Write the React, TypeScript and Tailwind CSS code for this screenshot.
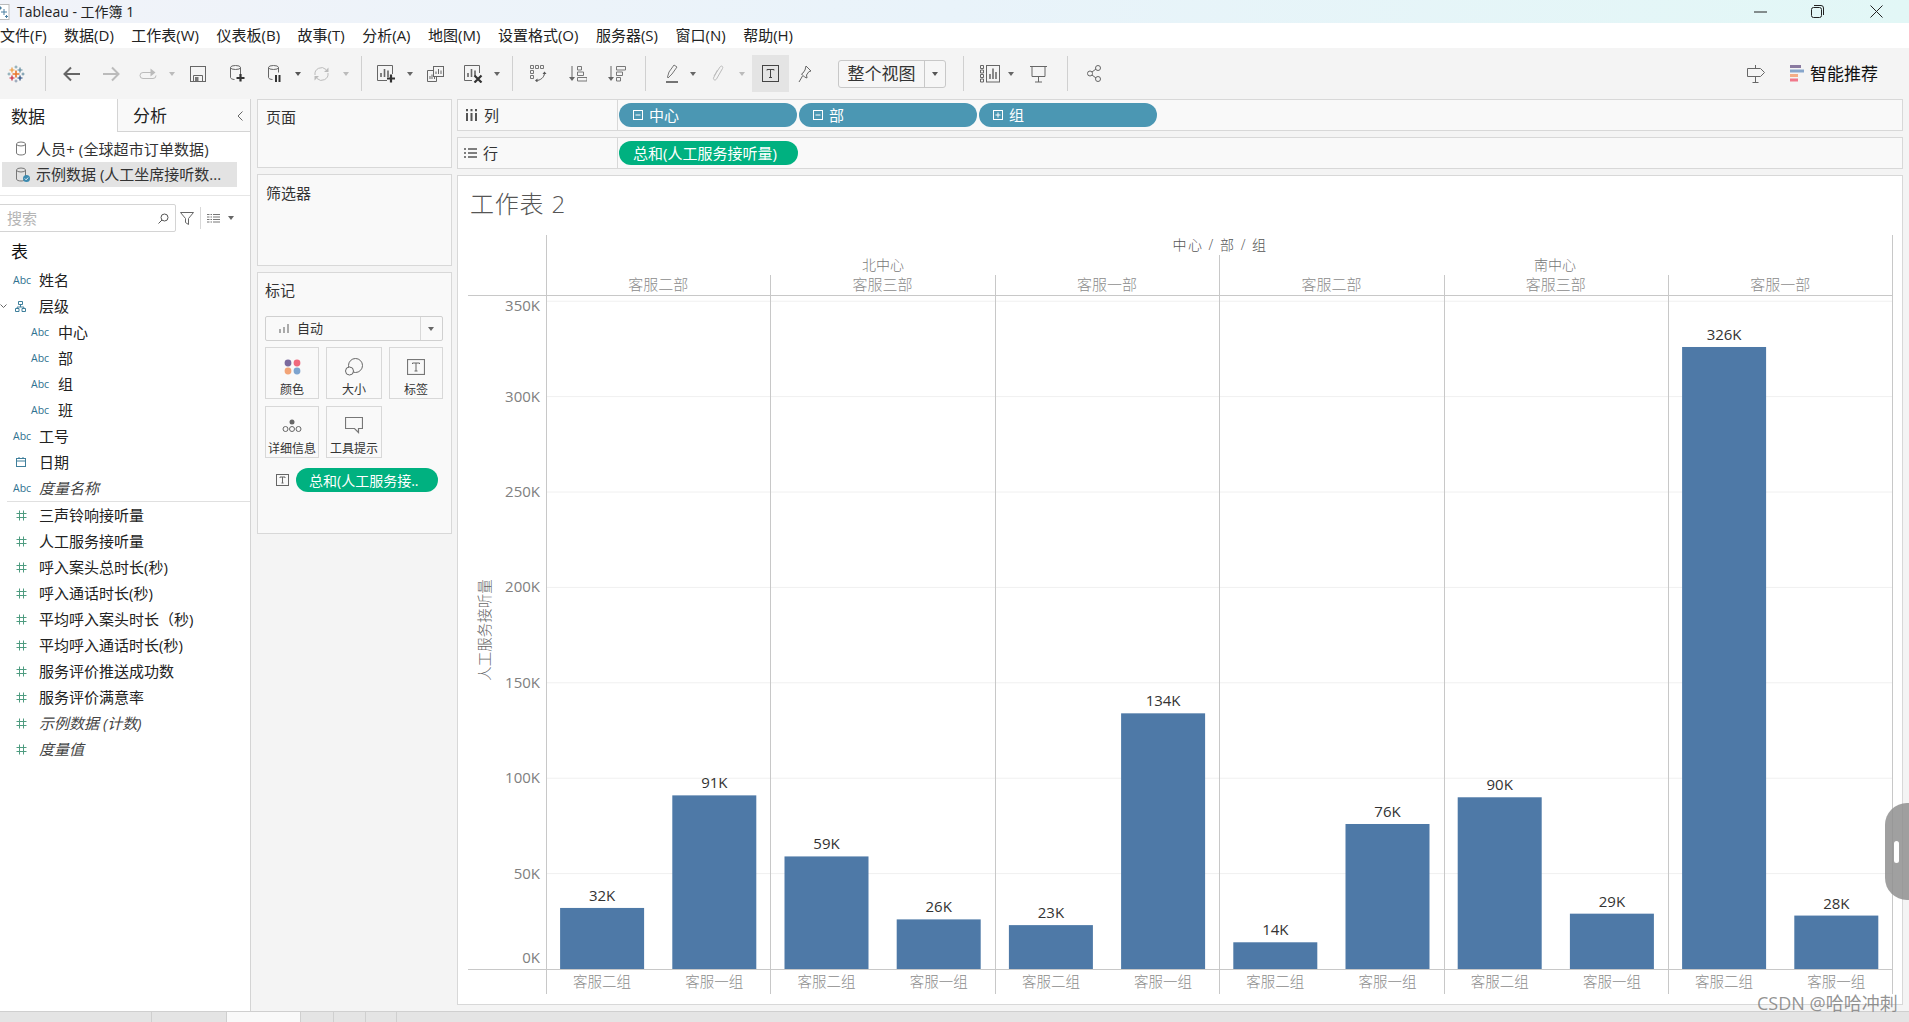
const bars = [
  { sub: "客服二组", value: 32 },
  { sub: "客服一组", value: 91 },
  { sub: "客服二组", value: 59 },
  { sub: "客服一组", value: 26 },
  { sub: "客服二组", value: 23 },
  { sub: "客服一组", value: 134 },
  { sub: "客服二组", value: 14 },
  { sub: "客服一组", value: 76 },
  { sub: "客服二组", value: 90 },
  { sub: "客服一组", value: 29 },
  { sub: "客服二组", value: 326 },
  { sub: "客服一组", value: 28 },
];
const depts = ["客服二部", "客服三部", "客服一部", "客服二部", "客服三部", "客服一部"];
const menus = ["数据(D)", "工作表(W)", "仪表板(B)", "故事(T)", "分析(A)", "地图(M)", "设置格式(O)", "服务器(S)", "窗口(N)", "帮助(H)"];
const measures = [
  { name: "三声铃响接听量" },
  { name: "人工服务接听量" },
  { name: "呼入案头总时长(秒)" },
  { name: "呼入通话时长(秒)" },
  { name: "平均呼入案头时长（秒)" },
  { name: "平均呼入通话时长(秒)" },
  { name: "服务评价推送成功数" },
  { name: "服务评价满意率" },
  { name: "示例数据 (计数)", italic: true },
  { name: "度量值", italic: true },
];

const PANE = 224.4;
const LEFT = 546;
const BASE = 969;
const PX_PER_K = 1.908;

function Caret({ className = "" }: { className?: string }) {
  return (
    <svg width="6" height="4" viewBox="0 0 6 4" className={className}>
      <path d="M0 0h6L3 4z" fill="currentColor" />
    </svg>
  );
}

function Sep({ className = "" }: { className?: string }) {
  return <div className={`w-px h-[35px] bg-[#d0d0d0] shrink-0 ${className}`} />;
}

function TableauLogo({ className = "" }: { className?: string }) {
  const crosses = [
    { x: 9, y: 9, r: 3.5, c: "#e8762b", w: 1.6 },
    { x: 5, y: 5, r: 2.5, c: "#ee9a3a", w: 1.2 },
    { x: 13, y: 5, r: 2.5, c: "#5b879b", w: 1.2 },
    { x: 5, y: 13, r: 2.5, c: "#c72035", w: 1.2 },
    { x: 13, y: 13, r: 2.5, c: "#1f447b", w: 1.2 },
    { x: 9, y: 2, r: 1.5, c: "#7199a6", w: 0.9 },
    { x: 9, y: 16, r: 1.5, c: "#7d8fa8", w: 0.9 },
    { x: 2, y: 9, r: 1.5, c: "#7099a6", w: 0.9 },
    { x: 16, y: 9, r: 1.5, c: "#59879b", w: 0.9 },
  ];
  return (
    <svg width="18" height="18" viewBox="0 0 18 18" className={`shrink-0 ${className}`}>
      {crosses.map((p, i) => (
        <path key={i} d={`M${p.x - p.r} ${p.y}h${p.r * 2}M${p.x} ${p.y - p.r}v${p.r * 2}`} stroke={p.c} strokeWidth={p.w} fill="none" />
      ))}
    </svg>
  );
}

function Cylinder({ extra }: { extra?: "check" }) {
  return (
    <svg width="16" height="16" viewBox="0 0 16 16" className="shrink-0">
      <ellipse cx="6" cy="3" rx="4.5" ry="2" fill="none" stroke="#777" />
      <path d="M1.5 3v9c0 1.2 2 2 4.5 2M10.500 3v4" fill="none" stroke="#777" />
      {extra === "check" ? (
        <>
          <path d="M10.500 3v9c0 1.200-2 2-4.500 2" fill="none" stroke="#777" />
          <circle cx="11.500" cy="11.500" r="3.500" fill="#3d8bb0" />
          <path d="M9.800 11.500l1.300 1.300 2-2.200" fill="none" stroke="#fff" strokeWidth="0.900" />
        </>
      ) : (
        <path d="M10.500 3v9c0 1.200-2 2-4.500 2" fill="none" stroke="#777" />
      )}
    </svg>
  );
}

function HashIcon() {
  return (
    <svg width="11" height="11" viewBox="0 0 11 11" className="shrink-0">
      <path d="M3.500 0.500v10M7.500 0.500v10M0.500 3.500h10M0.500 7.500h10" stroke="#4e9c80" strokeWidth="1" fill="none" />
    </svg>
  );
}

function Abc() {
  return <span className="text-[10.5px] leading-none text-[#2f7290] w-[16px] shrink-0 not-italic">Abc</span>;
}

function PillBox({ plus }: { plus?: boolean }) {
  return (
    <svg width="10" height="10" viewBox="0 0 10 10" className="shrink-0">
      <rect x="0.500" y="0.500" width="9" height="9" fill="none" stroke="#fff" />
      <path d={plus ? "M2.500 5h5M5 2.500v5" : "M2.500 5h5"} stroke="#fff" />
    </svg>
  );
}

function Row({ children, indent, italic }: { children: React.ReactNode; indent?: boolean; italic?: boolean }) {
  return (
    <div className={`h-[26px] flex items-center text-[15px] shrink-0 ${indent ? "pl-[31px]" : "pl-[13px]"} ${italic ? "italic text-[#444]" : "text-[#222]"}`}>
      {children}
    </div>
  );
}

function MarkBtn({ label, icon, wide }: { label: string; icon: React.ReactNode; wide?: boolean }) {
  return (
    <div className={`${wide ? "w-[56px]" : "w-[54px]"} h-[52px] border border-[#d8d8d8] bg-[#f9f9f9] flex flex-col items-center shrink-0`}>
      <div className="h-[35px] flex items-center justify-center pt-[2px]">{icon}</div>
      <span className="text-[12px] leading-[14px] text-[#333] whitespace-nowrap">{label}</span>
    </div>
  );
}

function Chart() {
  return (
    <svg width="1444" height="775" viewBox="458 228 1444 775" className="block font-['Open_Sans','Noto_Sans_CJK_SC',sans-serif]">
      {[50, 100, 150, 200, 250, 300, 350].map((k) => (
        <line key={k} x1={LEFT} x2={1892} y1={BASE - k * PX_PER_K} y2={BASE - k * PX_PER_K} stroke="#f0f0f0" />
      ))}
      {[0, 50, 100, 150, 200, 250, 300, 350].map((k) => {
        const y = k === 0 ? 963 : k === 350 ? 311 : BASE - k * PX_PER_K + 5;
        return (
          <text key={k} x={540} y={y} textAnchor="end" fontSize="15" fill="#808080">
            {k}K
          </text>
        );
      })}
      <text transform="translate(490 630) rotate(-90)" textAnchor="middle" fontSize="14.500" fill="#666" fontWeight="300">
        人工服务接听量
      </text>

      <line x1={468} x2={1893} y1={295.500} y2={295.500} stroke="#c8c8c8" />
      <line x1={468} x2={1893} y1={969.500} y2={969.500} stroke="#c8c8c8" />
      <line x1={546.500} x2={546.500} y1={235} y2={994} stroke="#c8c8c8" />
      {[1, 2, 4, 5].map((i) => (
        <line key={i} x1={Math.round(LEFT + i * PANE) + 0.5} x2={Math.round(LEFT + i * PANE) + 0.5} y1={275} y2={994} stroke="#c8c8c8" />
      ))}
      <line x1={1219.500} x2={1219.500} y1={255} y2={994} stroke="#c8c8c8" />
      <line x1={1892.500} x2={1892.500} y1={235} y2={994} stroke="#c8c8c8" />

      <text x={1220} y={250} textAnchor="middle" fontSize="14" letterSpacing="1.5" fill="#555" fontWeight="300">
        中心 / 部 / 组
      </text>
      <text x={883} y={270} textAnchor="middle" fontSize="14" fill="#777" fontWeight="300">
        北中心
      </text>
      <text x={1555} y={270} textAnchor="middle" fontSize="14" fill="#777" fontWeight="300">
        南中心
      </text>
      {depts.map((d, i) => (
        <text key={i} x={LEFT + (i + 0.5) * PANE} y={290} textAnchor="middle" fontSize="15" fill="#8c8c8c" fontWeight="300">
          {d}
        </text>
      ))}

      {bars.map((b, i) => {
        const cx = LEFT + (i + 0.5) * (PANE / 2);
        const h = b.value * PX_PER_K;
        return (
          <g key={i}>
            <rect x={cx - 42} y={BASE - h} width={84} height={h} fill="#4e79a7" />
            <text x={cx} y={BASE - h - 7} textAnchor="middle" fontSize="15" fill="#333">
              {b.value}K
            </text>
            <text x={cx} y={987} textAnchor="middle" fontSize="14.500" fill="#8c8c8c" fontWeight="300">
              {b.sub}
            </text>
          </g>
        );
      })}
    </svg>
  );
}

export default function App() {
  return (
    <div className="relative w-[1909px] h-[1022px] overflow-hidden flex flex-col bg-[#f4f4f4] text-[#222] font-['Open_Sans','Noto_Sans_CJK_SC',sans-serif]">
      {/* title bar */}
      <div className="h-[23px] shrink-0 flex items-center bg-gradient-to-r from-[#f1f3f9] via-[#e9f3fa] to-[#e2f7f6]">
        <svg width="10" height="16" viewBox="0 0 10 16" className="shrink-0">
          <rect x="-6" y="0.500" width="15" height="15" fill="#fff" stroke="#bbb" />
          <path d="M1 8h6M4 5v6M-1 4h3M0.500 2.500v3M5 12.500h3M6.500 11v3" stroke="#4b7ea0" />
        </svg>
        <span className="ml-[7px] text-[14px] text-[#222]">Tableau - 工作簿 1</span>
        <svg width="13" height="2" viewBox="0 0 13 2" className="ml-auto">
          <path d="M0 1h13" stroke="#222" />
        </svg>
        <svg width="13" height="13" viewBox="0 0 13 13" className="ml-[44px]">
          <rect x="0.500" y="2.500" width="10" height="10" rx="2" fill="none" stroke="#222" />
          <path d="M3 .5h7a2.500 2.500 0 0 1 2.500 2.500v7" fill="none" stroke="#222" />
        </svg>
        <svg width="13" height="13" viewBox="0 0 13 13" className="ml-[46px] mr-[26px]">
          <path d="M0.500 0.500l12 12M12.500 0.500l-12 12" stroke="#222" />
        </svg>
      </div>

      {/* menu */}
      <div className="h-[25px] shrink-0 bg-white flex items-center gap-[17.5px] text-[15px] text-[#222] whitespace-nowrap">
        <span>文件(F)</span>
        {menus.map((m) => (
          <span key={m}>{m}</span>
        ))}
      </div>

      {/* toolbar */}
      <div className="h-[51px] shrink-0 flex items-center bg-[#f4f4f4] text-[#666]">
        <TableauLogo className="ml-[7px]" />
        <Sep className="ml-[20px]" />
        <svg width="18" height="16" viewBox="0 0 18 16" className="ml-[17px] shrink-0">
          <path d="M17 8H2M8 1.500L1.500 8 8 14.500" fill="none" stroke="#666" strokeWidth="2" />
        </svg>
        <svg width="18" height="16" viewBox="0 0 18 16" className="ml-[21px] shrink-0">
          <path d="M1 8h15M10 1.500L16.500 8 10 14.500" fill="none" stroke="#bbb" strokeWidth="2" />
        </svg>
        <svg width="18" height="14" viewBox="0 0 18 14" className="ml-[19px] shrink-0">
          <path d="M14 5.500H4a3 3 0 0 0 0 6h10a3 3 0 0 0 3-3" fill="none" stroke="#bbb" />
          <path d="M11.500 1.500v8l5-4z" fill="#bbb" />
        </svg>
        <Caret className="ml-[12px] shrink-0 text-[#bbb]" />
        <svg width="16" height="16" viewBox="0 0 16 16" className="ml-[15px] shrink-0">
          <rect x="0.500" y="0.500" width="15" height="15" fill="none" stroke="#666" />
          <path d="M3.500 15.500v-6h9v6" fill="none" stroke="#666" />
          <rect x="5" y="11" width="3.500" height="4" fill="#777" />
        </svg>
        <svg width="14" height="17" viewBox="0 0 14 17" className="ml-[24px] shrink-0 overflow-visible">
          <ellipse cx="5.500" cy="2.500" rx="5" ry="2" fill="none" stroke="#666" />
          <path d="M0.500 2.500v10c0 1 2 2 4 2M10.500 2.500v7" fill="none" stroke="#666" />
          <path d="M10.500 9v7.500M6.500 13h8" stroke="#333" strokeWidth="2.200" />
        </svg>
        <svg width="12" height="17" viewBox="0 0 12 17" className="ml-[24px] shrink-0 overflow-visible">
          <ellipse cx="5.500" cy="2.500" rx="5" ry="2" fill="none" stroke="#666" />
          <path d="M0.500 2.500v10c0 1 2 2 4 2M10.500 2.500v5" fill="none" stroke="#666" />
          <path d="M8 10v7M11.500 10v7" stroke="#333" strokeWidth="2" />
        </svg>
        <Caret className="ml-[15px] shrink-0 text-[#555]" />
        <svg width="17" height="16" viewBox="0 0 17 16" className="ml-[12px] shrink-0">
          <path d="M2 9a6.500 6.500 0 0 1 11-5.500M15 7a6.500 6.500 0 0 1-11 5.500" fill="none" stroke="#bbb" />
          <path d="M15.500 1.500v4.500h-4.500zM1.500 14.500V10h4.500z" fill="#bbb" />
        </svg>
        <Caret className="ml-[13px] shrink-0 text-[#bbb]" />
        <Sep className="ml-[12px]" />
        <svg width="19" height="18" viewBox="0 0 19 18" className="ml-[15px] shrink-0">
          <path d="M15.500 9V.5H.5v15H10" fill="none" stroke="#666" />
          <path d="M4 12V8M7.500 12V4M11 12V5.500" stroke="#666" strokeWidth="1.600" />
          <path d="M14 9.500v8M10 13.500h8" stroke="#333" strokeWidth="2.200" />
        </svg>
        <Caret className="ml-[11px] shrink-0 text-[#666]" />
        <svg width="17" height="16" viewBox="0 0 17 16" className="ml-[14px] shrink-0">
          <rect x="6.500" y="0.500" width="10" height="10" fill="#f4f4f4" stroke="#666" />
          <path d="M9 8V5.500M11.500 8V3M14 8V4.500" stroke="#666" />
          <path d="M6 4.500H.5v11h9V10.500" fill="none" stroke="#666" />
          <path d="M3 13V10M5 13V8.500M7.500 13v-2" stroke="#666" />
        </svg>
        <svg width="19" height="18" viewBox="0 0 19 18" className="ml-[20px] shrink-0">
          <path d="M15.500 8V.5H.5v15H8" fill="none" stroke="#666" />
          <path d="M4 12V8M7.500 12V4M11 11V5.500" stroke="#666" strokeWidth="1.600" />
          <path d="M10.500 10.500l7 7M17.500 10.500l-7 7" stroke="#333" strokeWidth="2.200" />
        </svg>
        <Caret className="ml-[11px] shrink-0 text-[#666]" />
        <Sep className="ml-[12px]" />
        <svg width="17" height="17" viewBox="0 0 17 17" className="ml-[17px] shrink-0">
          <path d="M.5.500h3v3h-3zM5.500.500h3v3h-3zM10.500.500h3v3h-3zM.5 5.500h3v3h-3zM.5 10.500h3v3h-3z" fill="none" stroke="#777" />
          <path d="M6 15.500c4.500 0 8-3 8.500-7" fill="none" stroke="#555" />
          <path d="M12.500 9l2-2.500 2 2.500zM7.500 13.500v4l-2.500-2z" fill="#555" />
        </svg>
        <svg width="18" height="16" viewBox="0 0 18 16" className="ml-[22px] shrink-0">
          <path d="M3 0v13" stroke="#666" />
          <path d="M0 11h6l-3 4z" fill="#666" />
          <path d="M8.500.5h4v3.500h-4zM8.500 6h6v3.500h-6zM8.500 11.500h9.500V15h-9.500z" fill="none" stroke="#777" />
        </svg>
        <svg width="18" height="16" viewBox="0 0 18 16" className="ml-[21px] shrink-0">
          <path d="M3 0v13" stroke="#666" />
          <path d="M0 11h6l-3 4z" fill="#666" />
          <path d="M8.500.5h9v3.500h-9zM8.500 6h6v3.500h-6zM8.500 11.500h4V15h-4z" fill="none" stroke="#777" />
        </svg>
        <Sep className="ml-[19px]" />
        <svg width="12" height="19" viewBox="0 0 12 19" className="ml-[20px] shrink-0">
          <path d="M1.500 13L3 8 8 1l3 2-5 7-4 4z" fill="none" stroke="#777" />
          <path d="M0 18h12" stroke="#666" strokeWidth="1.800" />
        </svg>
        <Caret className="ml-[12px] shrink-0 text-[#666]" />
        <svg width="12" height="19" viewBox="0 0 12 19" className="ml-[16px] shrink-0">
          <path d="M2 12l6-9c1.500-2 3.500-.5 2.500 1.500L4.500 15c-1 1.800-3.500 1-3-1l4-8" fill="none" stroke="#bbb" />
        </svg>
        <Caret className="ml-[15px] shrink-0 text-[#bbb]" />
        <div className="ml-[7px] w-[37px] h-[37px] bg-[#e4e4e4] flex items-center justify-center shrink-0">
          <svg width="17" height="17" viewBox="0 0 17 17">
            <rect x="0.500" y="0.500" width="16" height="16" fill="none" stroke="#444" />
            <path d="M5 5.500V4.500h7v1M8.500 4.500v8M7 12.500h3" fill="none" stroke="#444" />
          </svg>
        </div>
        <svg width="14" height="18" viewBox="0 0 14 18" className="ml-[9px] shrink-0">
          <path d="M8 1l5 5-2 .5-2.500 3.500.5 3-2.500-1-3-3L5 8l2-3z" fill="none" stroke="#666" />
          <path d="M4.500 11L1 17" stroke="#666" />
        </svg>
        <div className="ml-[26px] w-[108px] h-[28px] border border-[#c8c8c8] rounded-[3px] flex items-center bg-[#f6f6f6] shrink-0">
          <span className="w-[85px] text-center text-[17px] leading-none text-[#333]">整个视图</span>
          <div className="w-px h-full bg-[#c8c8c8]" />
          <Caret className="ml-[7px] text-[#555]" />
        </div>
        <Sep className="ml-[17px]" />
        <svg width="20" height="18" viewBox="0 0 20 18" className="ml-[16px] shrink-0">
          <path d="M.5.500h3v3h-3zM.5 5h3v3h-3zM.5 9.500h3v3h-3zM.5 14h3v3h-3z" fill="none" stroke="#666" />
          <rect x="6.500" y="0.500" width="13" height="16.500" fill="none" stroke="#666" />
          <path d="M10 14V9M13 14V3.500M16 14V7" stroke="#666" strokeWidth="1.500" />
        </svg>
        <Caret className="ml-[8px] shrink-0 text-[#666]" />
        <svg width="17" height="18" viewBox="0 0 17 18" className="ml-[16px] shrink-0">
          <path d="M0 1.500h17M2 1.500v10h13v-10M8.500 11.500v5.500M5 17h7" fill="none" stroke="#666" />
        </svg>
        <Sep className="ml-[20px]" />
        <svg width="14" height="17" viewBox="0 0 14 17" className="ml-[19px] shrink-0">
          <circle cx="3" cy="8.500" r="2.500" fill="none" stroke="#666" />
          <circle cx="11" cy="3" r="2.500" fill="none" stroke="#666" />
          <circle cx="11" cy="14" r="2.500" fill="none" stroke="#666" />
          <path d="M5 7l4-3M5 10l4 3" stroke="#666" />
        </svg>
        <svg width="18" height="19" viewBox="0 0 18 19" className="ml-auto shrink-0">
          <path d="M.5 4.500h13l4 4-4 4H.5z" fill="none" stroke="#666" />
          <path d="M8.500 1v3M8.500 12.500v6M5.500 18.500h6" fill="none" stroke="#666" />
        </svg>
        <svg width="14" height="17" viewBox="0 0 14 17" className="ml-[25px] shrink-0">
          <rect x="0" y="0" width="11" height="3" fill="#8a7aa0" />
          <rect x="0" y="4.500" width="14" height="3" fill="#87a6cb" />
          <rect x="0" y="9" width="8" height="3" fill="#f3ad86" />
          <rect x="0" y="13.500" width="8" height="3" fill="#f0788a" />
        </svg>
        <span className="ml-[6px] mr-[31px] text-[17px] leading-none text-[#111]">智能推荐</span>
      </div>

      <div className="flex-1 flex min-h-0">
        {/* data panel */}
        <div className="w-[251px] shrink-0 bg-white border-r border-[#d4d4d4] flex flex-col">
          <div className="h-[33px] flex shrink-0">
            <div className="w-[117px] flex items-center pl-[11px] pt-[2px] text-[17px] text-[#222]">数据</div>
            <div className="flex-1 flex items-center pl-[15px] pt-[2px] text-[17px] text-[#222] bg-[#f9f9f9] border-l border-b border-[#d4d4d4]">
              <span>分析</span>
              <svg width="6" height="10" viewBox="0 0 6 10" className="ml-auto mr-[7px]">
                <path d="M5.500.500L1 5l4.500 4.500" fill="none" stroke="#666" />
              </svg>
            </div>
          </div>
          <div className="mt-[5px] h-[24px] flex items-center pl-[15px] gap-[5px] text-[15px] text-[#333] whitespace-nowrap">
            <Cylinder />
            <span className="tracking-[0.1px]">人员+ (全球超市订单数据)</span>
          </div>
          <div className="mt-[1px] mx-[2px] w-[235px] h-[25px] bg-[#e3e3e3] flex items-center pl-[13px] gap-[5px] text-[15px] text-[#333] whitespace-nowrap">
            <Cylinder extra="check" />
            <span>示例数据 (人工坐席接听数...</span>
          </div>
          <div className="mt-[8px] h-px bg-[#e6e6e6] shrink-0" />
          <div className="mt-[8px] h-[28px] flex items-center shrink-0">
            <div className="ml-[-2px] w-[178px] h-full border border-[#d4d4d4] rounded-[2px] flex items-center pl-[8px] text-[15px] text-[#b5b5b5]">
              <span>搜索</span>
              <svg width="11" height="11" viewBox="0 0 11 11" className="ml-auto mr-[6px]">
                <circle cx="6.500" cy="4.500" r="3.500" fill="none" stroke="#555" />
                <path d="M4 7L.5 10.500" stroke="#555" />
              </svg>
            </div>
            <svg width="14" height="13" viewBox="0 0 14 13" className="ml-[4px]">
              <path d="M.5.500h13L8.500 6.500v6l-3-2v-4z" fill="none" stroke="#666" />
            </svg>
            <div className="ml-[6px] w-px h-[22px] bg-[#d8d8d8]" />
            <svg width="13" height="9" viewBox="0 0 13 9" className="ml-[6px]">
              <path d="M0 .5h13M0 3h13M0 5.500h13M0 8h13" stroke="#777" />
              <path d="M3 0v9M5.500 0v9" stroke="#fff" />
            </svg>
            <Caret className="ml-[8px] text-[#666]" />
          </div>
          <div className="mt-[7px] h-[26px] flex items-center pl-[11px] text-[17px] text-[#111] shrink-0">表</div>
          <div className="mt-[2px]" />
          <Row>
            <Abc />
            <span className="ml-[10px]">姓名</span>
          </Row>
          <div className="h-[26px] flex items-center text-[15px] shrink-0 relative pl-[15px]">
            <svg width="7" height="4" viewBox="0 0 7 4" className="absolute left-0 top-[11px]">
              <path d="M.5.500L3.500 3.500 6.500.5" fill="none" stroke="#666" />
            </svg>
            <svg width="11" height="11" viewBox="0 0 11 11" className="shrink-0">
              <path d="M3.500.5h4v3h-4zM.5 7.500h3.500v3H.5zM7 7.500h3.500v3H7zM5.500 3.500v2.500M2.200 7.500V6H8.800v1.500" fill="none" stroke="#3f7f9b" />
            </svg>
            <span className="ml-[13px] text-[#222]">层级</span>
          </div>
          {["中心", "部", "组", "班"].map((f) => (
            <Row indent key={f}>
              <Abc />
              <span className="ml-[11px]">{f}</span>
            </Row>
          ))}
          <Row>
            <Abc />
            <span className="ml-[10px]">工号</span>
          </Row>
          <div className="h-[26px] flex items-center text-[15px] pl-[16px] shrink-0">
            <svg width="10" height="10" viewBox="0 0 10 10" className="shrink-0">
              <rect x="0.500" y="1.500" width="9" height="8" fill="none" stroke="#3f7f9b" />
              <path d="M.5 4h9M3 0v2M7 0v2" stroke="#3f7f9b" />
            </svg>
            <span className="ml-[13px] text-[#222]">日期</span>
          </div>
          <Row italic>
            <Abc />
            <span className="ml-[10px]">度量名称</span>
          </Row>
          <div className="ml-[7px] h-px bg-[#e0e0e0] shrink-0" />
          {measures.map((m) => (
            <div key={m.name} className={`h-[26px] flex items-center text-[15px] pl-[16px] shrink-0 whitespace-nowrap ${m.italic ? "italic text-[#444]" : "text-[#222]"}`}>
              <HashIcon />
              <span className="ml-[12px]">{m.name}</span>
            </div>
          ))}
        </div>

        {/* pages, filters, marks */}
        <div className="ml-[6px] w-[195px] shrink-0 flex flex-col gap-[6px]">
          <div className="h-[69px] border border-[#d8d8d8] bg-[#f9f9f9] pl-[8px] pt-[6px] text-[15px] leading-[22px] text-[#333]">页面</div>
          <div className="h-[92px] border border-[#d8d8d8] bg-[#f9f9f9] pl-[8px] pt-[7px] text-[15px] leading-[22px] text-[#333]">筛选器</div>
          <div className="h-[262px] border border-[#d8d8d8] bg-[#f9f9f9] pl-[7px] pr-[8px] pt-[6px] text-[#333]">
            <div className="text-[15px] leading-[22px]">标记</div>
            <div className="mt-[15px] h-[25px] border border-[#d0d0d0] rounded-[2px] flex items-center text-[13px]">
              <svg width="10" height="9" viewBox="0 0 10 9" className="ml-[13px]">
                <path d="M1 9V5M5 9V3M9 9V0" stroke="#aaa" strokeWidth="2" />
              </svg>
              <span className="ml-[8px]">自动</span>
              <div className="ml-auto w-px h-full bg-[#d8d8d8]" />
              <Caret className="ml-[7px] mr-[8px] text-[#666]" />
            </div>
            <div className="mt-[6px] flex gap-[7px]">
              <MarkBtn
                label="颜色"
                icon={
                  <svg width="17" height="16" viewBox="0 0 17 16">
                    <circle cx="4" cy="4" r="3.400" fill="#7b6a9e" />
                    <circle cx="13" cy="4" r="3.400" fill="#f0697d" />
                    <circle cx="4" cy="12" r="3.400" fill="#f2a477" />
                    <circle cx="13" cy="12" r="3.400" fill="#7da4cf" />
                  </svg>
                }
              />
              <MarkBtn
                wide
                label="大小"
                icon={
                  <svg width="18" height="18" viewBox="0 0 18 18">
                    <circle cx="10.500" cy="7.500" r="7" fill="none" stroke="#666" />
                    <circle cx="4.500" cy="13" r="4" fill="#f9f9f9" stroke="#666" />
                  </svg>
                }
              />
              <MarkBtn
                label="标签"
                icon={
                  <svg width="18" height="16" viewBox="0 0 18 16">
                    <rect x="0.500" y="0.500" width="17" height="15" fill="none" stroke="#777" strokeWidth="1.200" />
                    <path d="M5.500 5V4h7v1M9 4v8M7.500 12h3" fill="none" stroke="#666" />
                  </svg>
                }
              />
            </div>
            <div className="mt-[7px] flex gap-[7px]">
              <MarkBtn
                label="详细信息"
                icon={
                  <svg width="20" height="14" viewBox="0 0 20 14">
                    <circle cx="10" cy="3" r="2.500" fill="#666" />
                    <circle cx="3.500" cy="10" r="2.500" fill="none" stroke="#666" />
                    <circle cx="10" cy="10" r="2.500" fill="none" stroke="#666" />
                    <circle cx="16.500" cy="10" r="2.500" fill="none" stroke="#666" />
                  </svg>
                }
              />
              <MarkBtn
                wide
                label="工具提示"
                icon={
                  <svg width="18" height="17" viewBox="0 0 18 17">
                    <path d="M.5.500h17v11h-4v4l-4-4H.5z" fill="none" stroke="#777" strokeWidth="1.200" />
                  </svg>
                }
              />
            </div>
            <div className="mt-[10px] flex items-center pl-[11px]">
              <svg width="13" height="12" viewBox="0 0 13 12" className="shrink-0">
                <rect x="0.500" y="0.500" width="12" height="11" fill="none" stroke="#666" />
                <path d="M4 4V3h5v1M6.500 3v6M5.500 9h2" fill="none" stroke="#666" />
              </svg>
              <div className="ml-[7px] w-[142px] h-[24px] rounded-full bg-[#00b180] text-white text-[14px] flex items-center pl-[13px] whitespace-nowrap">
                总和(人工服务接..
              </div>
            </div>
          </div>
        </div>

        {/* shelves and view */}
        <div className="ml-[5px] w-[1446px] shrink-0 flex flex-col">
          <div className="h-[32px] border border-[#d8d8d8] bg-[#f9f9f9] flex items-center shrink-0">
            <div className="w-[160px] h-full shrink-0 flex items-center pl-[7px] border-r border-[#d8d8d8] text-[15px] text-[#333]">
              <svg width="13" height="12" viewBox="0 0 13 12">
                <path d="M2 4v8M6.500 4v8M11 4v8" stroke="#555" strokeWidth="2" />
                <path d="M2 0v2.200M6.500 0v2.200M11 0v2.200" stroke="#555" strokeWidth="2" />
              </svg>
              <span className="ml-[6px]">列</span>
            </div>
            <div className="flex gap-[2px] pl-[1px]">
              {["中心", "部", "组"].map((p, i) => (
                <div key={p} className="w-[178px] h-[24px] rounded-full bg-[#4b97b3] text-white text-[15px] flex items-center pl-[14px] gap-[6px]">
                  <PillBox plus={i === 2} />
                  <span>{p}</span>
                </div>
              ))}
            </div>
          </div>
          <div className="mt-[6px] h-[32px] border border-[#d8d8d8] bg-[#f9f9f9] flex items-center shrink-0">
            <div className="w-[160px] h-full shrink-0 flex items-center pl-[6px] border-r border-[#d8d8d8] text-[15px] text-[#333]">
              <svg width="13" height="10" viewBox="0 0 13 10">
                <path d="M0 1h2M4 1h9M0 5h2M4 5h9M0 9h2M4 9h9" stroke="#555" strokeWidth="1.500" />
              </svg>
              <span className="ml-[6px]">行</span>
            </div>
            <div className="pl-[1px]">
              <div className="w-[179px] h-[24px] rounded-full bg-[#00b180] text-white text-[15px] flex items-center pl-[14px] whitespace-nowrap">
                总和(人工服务接听量)
              </div>
            </div>
          </div>
          <div className="mt-[6px] h-[830px] border border-[#d8d8d8] bg-white shrink-0">
            <div className="h-[52px] flex items-center pl-[12px] pt-[4px] text-[24px] font-light tracking-[0.8px] text-[#555]">工作表 2</div>
            <Chart />
          </div>
        </div>
      </div>

      {/* sheet tabs */}
      <div className="h-[11px] shrink-0 bg-[#e4e4e4] border-t border-[#cfcfcf] flex">
        <div className="w-[152px] border-r border-[#cfcfcf]" />
        <div className="w-[75px] border-r border-[#cfcfcf]" />
        <div className="w-[74px] bg-[#f9f9f9] border-r border-[#cfcfcf]" />
        <div className="w-[33px] border-r border-[#cfcfcf]" />
        <div className="w-[32px] border-r border-[#cfcfcf]" />
        <div className="w-[31px] border-r border-[#cfcfcf]" />
      </div>

      {/* windows handle + watermark lie over the view */}
      <div className="absolute left-[1885px] top-[803px] w-[24px] h-[97px] rounded-l-[22px] bg-[#8f8f8f]/85 flex items-center pl-[9px]">
        <div className="w-[5px] h-[22px] rounded-full bg-white" />
      </div>
      <div className="absolute left-[1757px] top-[992px] text-[18px] leading-[22px] text-[#808080]/85 whitespace-nowrap">CSDN @哈哈冲刺</div>
    </div>
  );
}
